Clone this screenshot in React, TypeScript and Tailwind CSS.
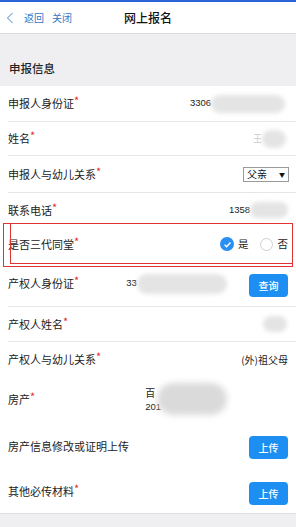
import React from "react";

const font = { fontFamily: '"Noto Sans CJK SC", "Noto Sans", sans-serif' };

function Star() {
  return <span className="text-[#e02a2a] text-[11px] align-top leading-none">*</span>;
}

function Blur({ className }: { className: string }) {
  return <div className={`rounded-full bg-[#e4e4e4] blur-[2px] ${className}`} />;
}

function Row({
  h,
  divider = false,
  children,
}: {
  h: string;
  divider?: boolean;
  children: React.ReactNode;
}) {
  return (
    <div className={`${h} ml-2 pr-2 flex items-center ${divider ? "border-b border-[#e6e6e6]" : ""}`}>
      {children}
    </div>
  );
}

function Label({ text, star = true }: { text: string; star?: boolean }) {
  return (
    <span className="text-[11px] text-[#222]">
      {text}
      {star && <Star />}
    </span>
  );
}

function BlueBtn({ text }: { text: string }) {
  return (
    <button className="w-[39px] h-[23px] rounded-[4px] bg-[#1e8ff2] text-white text-[10px] font-medium">
      {text}
    </button>
  );
}

export default function App() {
  return (
    <div className="w-[296px] h-[527px] bg-[#efeff2] overflow-hidden relative" style={font}>
      {/* top bar */}
      <div className="h-[2px] bg-[#2b63d8]" />
      <div className="h-[32px] bg-white border-b border-[#dcdcdc] flex items-center relative">
        <div className="flex items-center pl-[6px] gap-[8px] text-[#3478c6] text-[10px]">
          <svg width="8" height="12" viewBox="0 0 8 12" className="mr-[2px]">
            <path d="M6.5 1 L1.5 6 L6.5 11" fill="none" stroke="#3a86d4" strokeWidth="1" />
          </svg>
          <span>返回</span>
          <span>关闭</span>
        </div>
        <div className="absolute left-0 right-0 text-center text-[12px] font-medium text-[#111] pointer-events-none">
          网上报名
        </div>
      </div>

      {/* section header */}
      <div className="h-[52px] flex items-end pb-[9px] pl-[9px]">
        <span className="text-[11.5px] font-medium text-[#222]">申报信息</span>
      </div>

      <div className="bg-white">
        <Row h="h-[36px]" divider>
          <Label text="申报人身份证" />
          <div className="ml-auto flex items-center w-[98px]">
            <span className="text-[9.5px] text-[#222]" style={{ fontFamily: '"Liberation Sans", sans-serif' }}>
              3306
            </span>
            <Blur className="w-[74px] h-[18px]" />
          </div>
        </Row>
        <Row h="h-[34px]" divider>
          <Label text="姓名" />
          <div className="ml-auto flex items-center mr-[2px]">
            <span className="text-[9px] text-[#ccc]">王</span>
            <Blur className="w-[24px] h-[18px] bg-[#d4d4d4]" />
          </div>
        </Row>
        <Row h="h-[37px]" divider>
          <Label text="申报人与幼儿关系" />
          <div className="ml-auto flex items-center justify-between w-[46px] h-[15px] border border-[#9a9a9a] bg-white px-[3px] mr-[-1px]">
            <span className="text-[10px] text-[#111] leading-none">父亲</span>
            <span className="text-[6px] text-[#111]">▼</span>
          </div>
        </Row>
        <Row h="h-[34px]">
          <Label text="联系电话" />
          <div className="ml-auto flex items-center w-[59px]">
            <span className="text-[9.5px] text-[#222]" style={{ fontFamily: '"Liberation Sans", sans-serif' }}>
              1358
            </span>
            <Blur className="w-[40px] h-[16px]" />
          </div>
        </Row>
        <Row h="h-[34px]">
          <Label text="是否三代同堂" />
          <div className="ml-auto flex items-center text-[10.5px] text-[#222]">
            <span className="w-[14px] h-[14px] rounded-full bg-[#2a8ff0] flex items-center justify-center">
              <svg width="9" height="9" viewBox="0 0 10 10">
                <path d="M1.8 5.2 L4 7.4 L8.3 2.8" fill="none" stroke="white" strokeWidth="1.6" />
              </svg>
            </span>
            <span className="ml-[4px]">是</span>
            <span className="ml-[11px] w-[13px] h-[13px] rounded-full border border-[#cfcfcf]" />
            <span className="ml-[5px]">否</span>
          </div>
        </Row>
        <Row h="h-[46px]" divider>
          <Label text="产权人身份证" />
          <div className="flex items-center ml-[47px]">
            <span className="text-[9.5px] text-[#222]" style={{ fontFamily: '"Liberation Sans", sans-serif' }}>
              33
            </span>
            <Blur className="w-[90px] h-[20px]" />
          </div>
          <div className="ml-auto">
            <BlueBtn text="查询" />
          </div>
        </Row>
        <Row h="h-[35px]" divider>
          <Label text="产权人姓名" />
          <div className="ml-auto mr-[1px]">
            <Blur className="w-[24px] h-[16px] bg-[#d0d0d0]" />
          </div>
        </Row>
        <Row h="h-[34px]">
          <Label text="产权人与幼儿关系" />
          <span className="ml-auto text-[10px] text-[#222]">(外)祖父母</span>
        </Row>
        <Row h="h-[46px]">
          <Label text="房产" />
          <div className="ml-[110px] relative">
            <div className="text-[10px] text-[#222] leading-[15px]">百</div>
            <div className="text-[9.5px] text-[#222] leading-[13px]" style={{ fontFamily: '"Liberation Sans", sans-serif' }}>
              201
            </div>
            <div className="absolute left-[12px] top-[-2px] w-[70px] h-[32px] rounded-full bg-[#dadada] blur-[3px]" />
          </div>
        </Row>
        <Row h="h-[48px]">
          <Label text="房产信息修改或证明上传" star={false} />
          <div className="ml-auto">
            <BlueBtn text="上传" />
          </div>
        </Row>
        <Row h="h-[43px]">
          <Label text="其他必传材料" />
          <div className="ml-auto">
            <BlueBtn text="上传" />
          </div>
        </Row>
      </div>
      <div className="h-px bg-[#dedede]" />

      {/* annotation boxes */}
      <div className="absolute left-[3px] top-[223px] w-[290px] h-[44px] border-[1.5px] border-[#e03434] pointer-events-none" />
      <div className="absolute left-[10px] top-[223px] w-[283px] h-[41px] border-[1.5px] border-[#e03434] pointer-events-none" />
    </div>
  );
}
